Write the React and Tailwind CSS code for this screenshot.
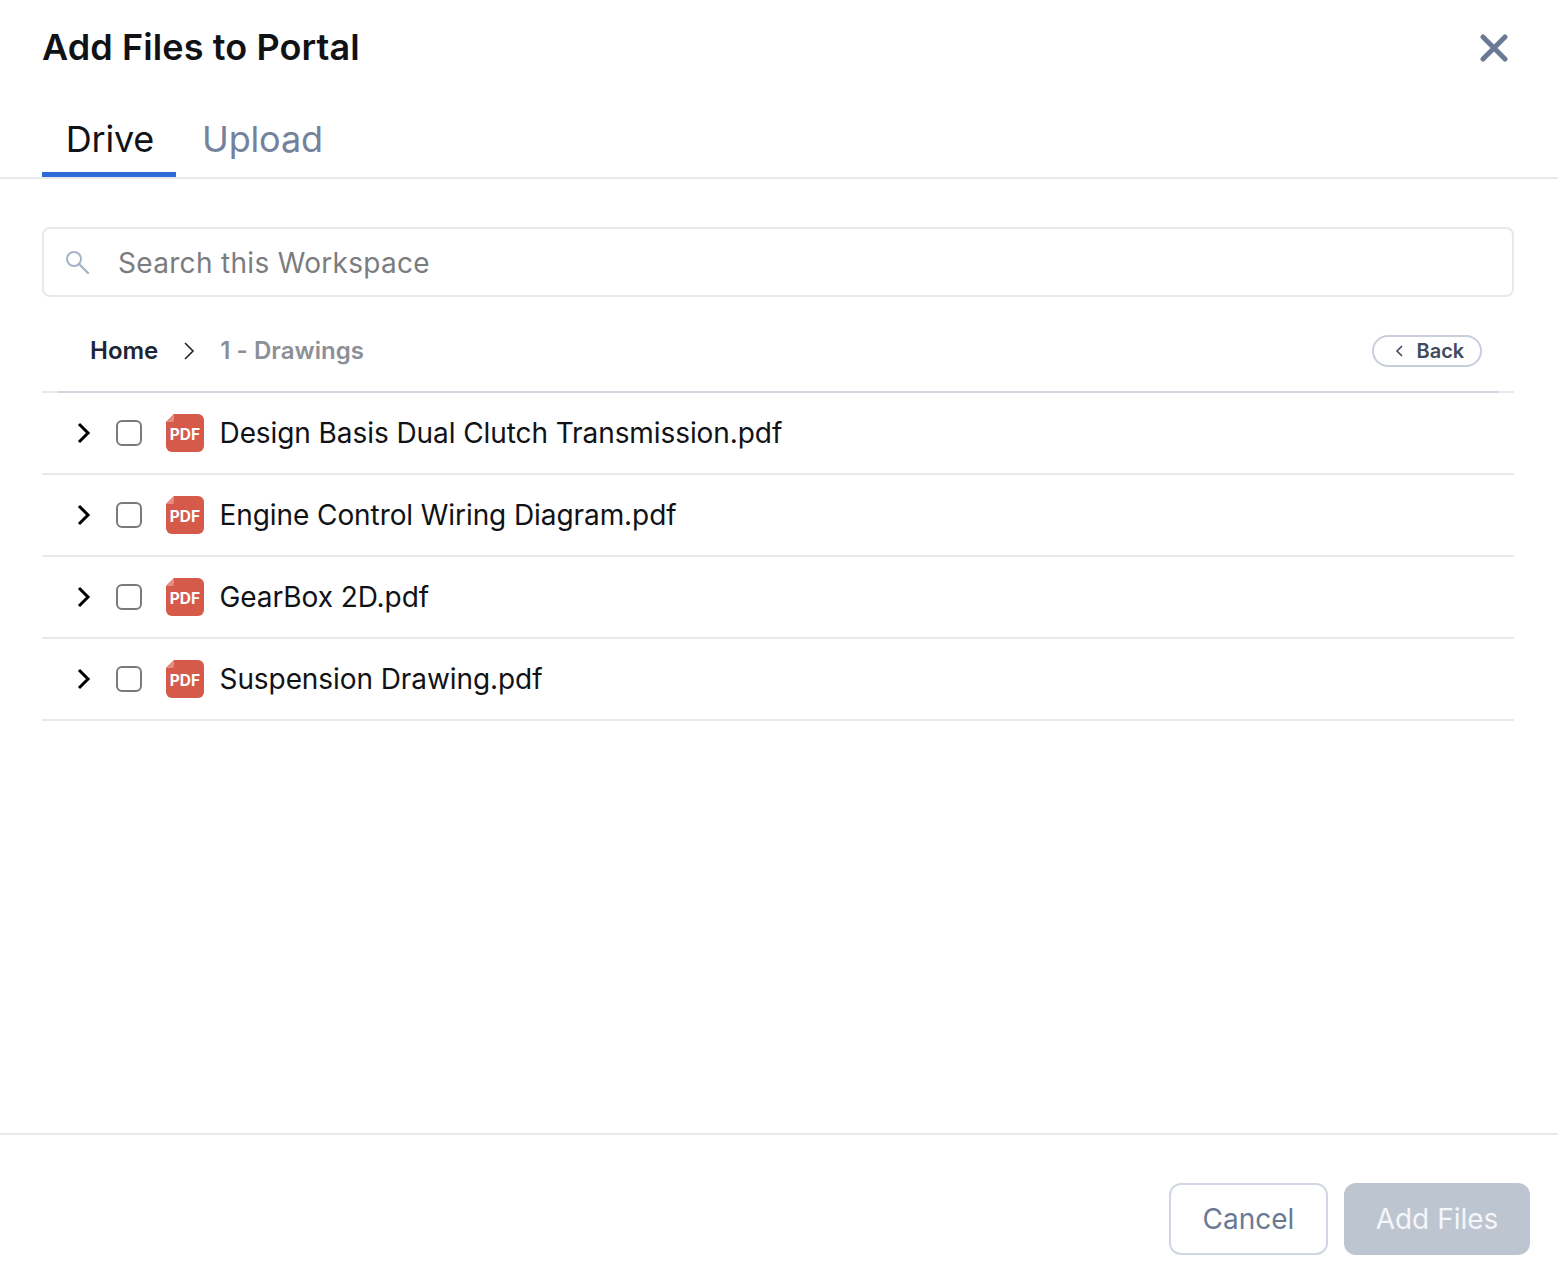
import React from 'react';

const files = [
  'Design Basis Dual Clutch Transmission.pdf',
  'Engine Control Wiring Diagram.pdf',
  'GearBox 2D.pdf',
  'Suspension Drawing.pdf',
];

const PdfIcon = () => (
  <div className="relative w-[38px] h-[38px] shrink-0">
    <svg width="38" height="38" viewBox="0 0 38 38" className="absolute inset-0">
      <path d="M8 0H32a6 6 0 0 1 6 6V32a6 6 0 0 1-6 6H6a6 6 0 0 1-6-6V8Z" fill="#d55a4a" />
      <path d="M8 0V6a2 2 0 0 1-2 2H0Z" fill="#e58d80" />
    </svg>
    <span className="absolute inset-0 flex items-center justify-center pt-[3px] text-white text-[15.5px] tracking-[0.1px] font-bold leading-none">
      PDF
    </span>
  </div>
);

const FileRow = ({ name }) => (
  <div className="h-[82px] flex items-center border-b-2 border-[#e8e8ef]">
    <svg width="16" height="22" viewBox="0 0 16 22" fill="none" className="ml-[34px] shrink-0">
      <path d="M3 2l9 9-9 9" stroke="#000" strokeWidth="3" />
    </svg>
    <div className="ml-[24px] w-[26px] h-[26px] rounded-[6px] border-2 border-[#7a7a7a] bg-white shrink-0" />
    <div className="ml-[24px]">
      <PdfIcon />
    </div>
    <span className="ml-[15.5px] text-[28px] leading-none tracking-[-0.08px] text-[#111216]">{name}</span>
  </div>
);

const App = () => {
  return (
    <div className="w-[1558px] h-[1286px] bg-white flex flex-col font-['Inter',sans-serif]">
      <div className="h-[95px] pl-[42px] pr-[50px] flex items-center justify-between">
        <h1 className="pb-[2px] text-[36px] leading-none font-semibold tracking-[0.1px] text-[#111216]">Add Files to Portal</h1>
        <svg width="28" height="28" viewBox="0 0 28 28" fill="none">
          <path d="M3 3l22 22M25 3L3 25" stroke="#6b7a94" strokeWidth="5" strokeLinecap="round" />
        </svg>
      </div>

      <div className="h-[84px] pl-[42px] flex items-stretch border-b-2 border-[#e8e8ef]">
        <div className="w-[134px] flex items-center justify-center pl-[2px] pt-[11px] border-b-[5px] border-[#2d6bdb] text-[36px] tracking-[-0.2px] text-[#111216]">
          Drive
        </div>
        <div className="ml-[26px] flex items-center pt-[11px] mb-[5px] text-[36px] tracking-[-0.15px] text-[#74829c]">Upload</div>
      </div>

      <div className="pl-[42px] pr-[44px] pt-[48px]">
        <div className="h-[70px] flex items-center border-2 border-[#e8e8ef] rounded-[8px]">
          <svg width="26" height="26" viewBox="0 0 26 26" fill="none" className="ml-[20px] shrink-0">
            <circle cx="10" cy="10" r="7" stroke="#a5b2c7" strokeWidth="2" />
            <path d="M15 15l9 9" stroke="#a5b2c7" strokeWidth="2.4" strokeLinecap="round" />
          </svg>
          <span className="ml-[28px] pt-[2px] text-[28px] leading-none tracking-[0.31px] text-[#7b7c80]">Search this Workspace</span>
        </div>

        <div className="h-[96px] border-b-2 border-[#e8e8ef]">
          <div className="h-[96px] mx-4 pt-[14px] border-b-2 border-[#d3d6e0] flex items-center justify-between pl-[32px] pr-[16px]">
            <div className="flex items-center">
              <span className="text-[24px] font-semibold text-[#1c2638]">Home</span>
              <svg width="12" height="20" viewBox="0 0 12 20" fill="none" className="ml-[25px]">
                <path d="M2 2l8 8-8 8" stroke="#222" strokeWidth="1.6" />
              </svg>
              <span className="ml-[25px] text-[24px] font-semibold tracking-[0.05px] text-[#8b9098]">1 - Drawings</span>
            </div>
            <button className="w-[110px] h-[32px] flex items-center border-2 border-[#c9cedb] rounded-full">
              <svg width="10" height="14" viewBox="0 0 10 14" fill="none" className="ml-[21px]">
                <path d="M7 2L2 7l5 5" stroke="#3f4b5f" strokeWidth="1.6" />
              </svg>
              <span className="ml-[11.5px] text-[20px] leading-none font-semibold text-[#3f4b5f]">Back</span>
            </button>
          </div>
        </div>

        {files.map((name) => (
          <FileRow key={name} name={name} />
        ))}
      </div>

      <div className="mt-[412px] h-[2px] bg-[#e8e8ef]" />

      <div className="pt-[48px] pr-[28px] flex justify-end gap-[16px]">
        <button className="w-[159px] h-[72px] rounded-[12px] border-2 border-[#d0d7e2] bg-white text-[28px] text-[#6b7a94]">
          Cancel
        </button>
        <button className="w-[186px] h-[72px] rounded-[12px] bg-[#bdc5d1] text-[28px] text-[#f4f6f9]">
          Add Files
        </button>
      </div>
    </div>
  );
};

export default App;
